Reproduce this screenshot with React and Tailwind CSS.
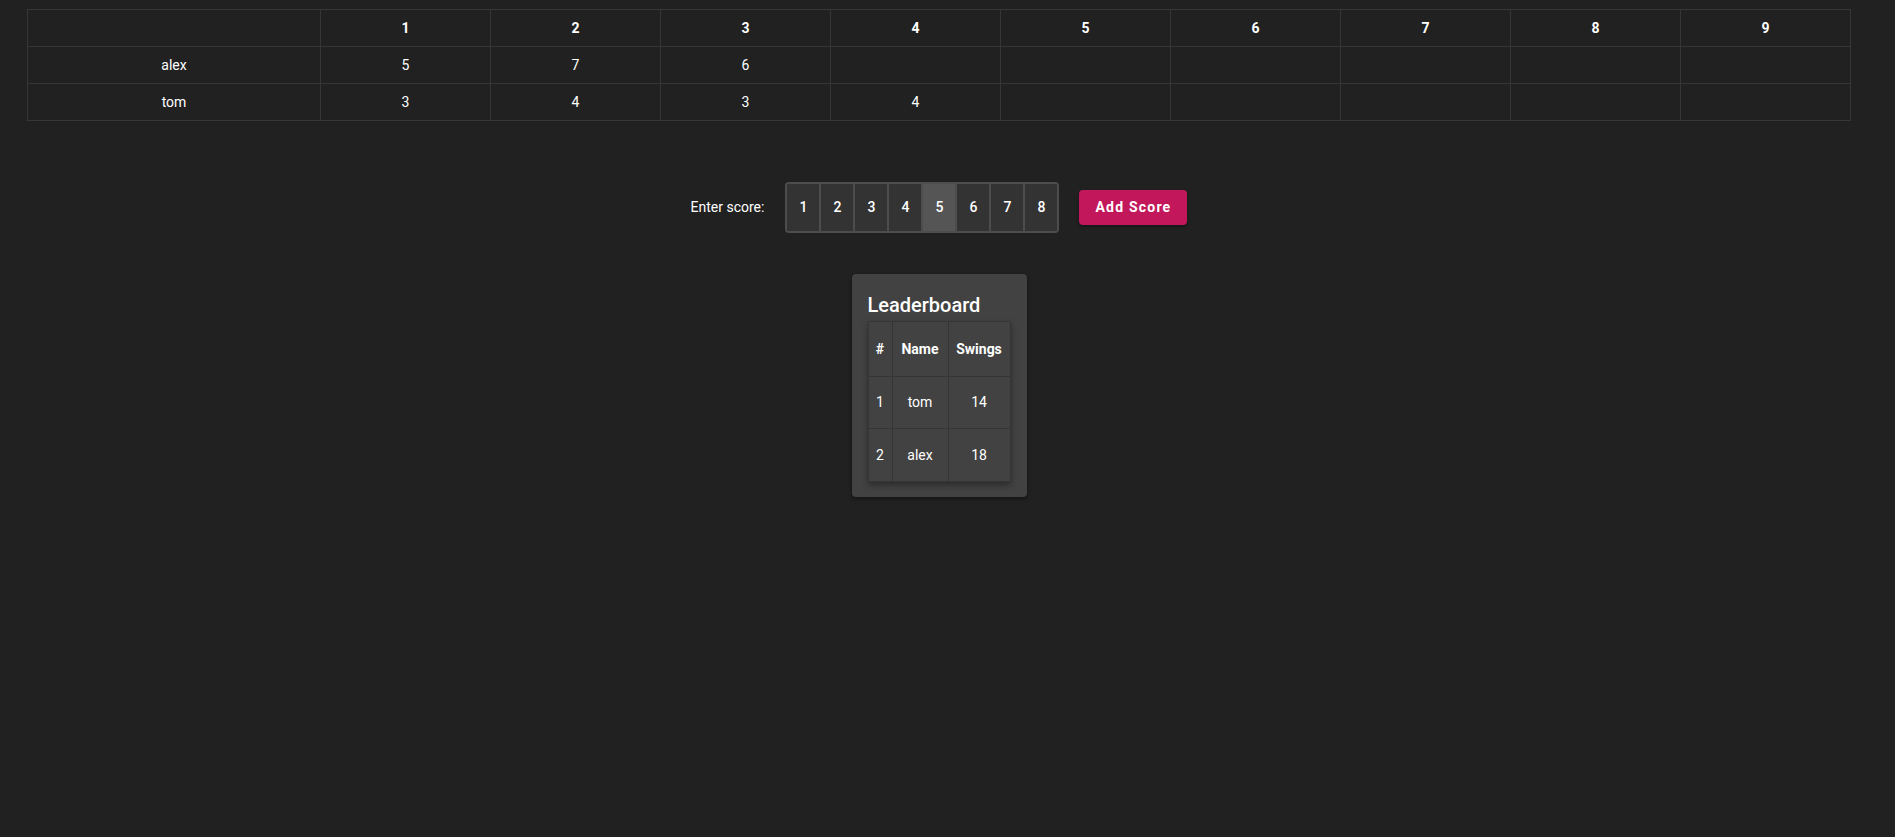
import React from "react";

const holes = [1, 2, 3, 4, 5, 6, 7, 8, 9];
const players = [
  { name: "alex", scores: [5, 7, 6] },
  { name: "tom", scores: [3, 4, 3, 4] },
];
const leaders = [
  { rank: 1, name: "tom", swings: 14 },
  { rank: 2, name: "alex", swings: 18 },
];

export default function App() {
  return (
    <div
      className="min-h-screen w-full bg-[#212121] text-white"
      style={{ fontFamily: "Roboto, 'Noto Sans', sans-serif" }}
    >
      <div className="w-[1878px] pt-[9px]">
        <div className="px-[27px]">
          <table className="w-full table-fixed border-collapse">
            <colgroup>
              <col className="w-[293px]" />
              {holes.map((h) => (
                <col key={h} />
              ))}
            </colgroup>
            <thead>
              <tr>
                <th className="h-[37px] border border-[#363636]"></th>
                {holes.map((h) => (
                  <th
                    key={h}
                    className="h-[37px] border border-[#363636] text-center text-[14px] font-bold"
                  >
                    {h}
                  </th>
                ))}
              </tr>
            </thead>
            <tbody>
              {players.map((p) => (
                <tr key={p.name}>
                  <td className="h-[37px] border border-[#363636] text-center text-[14px]">
                    {p.name}
                  </td>
                  {holes.map((h, i) => (
                    <td
                      key={h}
                      className="h-[37px] border border-[#363636] text-center text-[14px]"
                    >
                      {p.scores[i] ?? ""}
                    </td>
                  ))}
                </tr>
              ))}
            </tbody>
          </table>
        </div>

        <div className="mt-[61px] flex items-center justify-center">
          <span className="text-[14px] text-white">Enter score:</span>
          <div className="ml-[21px] flex overflow-hidden rounded-[4px] border-2 border-[#4d4d4d]">
            {[1, 2, 3, 4, 5, 6, 7, 8].map((n, i) => (
              <div
                key={n}
                className={
                  "flex h-[47px] items-center justify-center text-[14px] font-medium text-white " +
                  (i > 0 ? "w-[34px] border-l-2 border-[#4d4d4d] " : "w-[32px] ") +
                  (n === 5 ? "bg-[#555555]" : "bg-[#333333]")
                }
              >
                {n}
              </div>
            ))}
          </div>
          <button className="ml-[20px] flex h-[35px] w-[108px] items-center justify-center rounded-[4px] bg-[#c2185b] text-[14px] font-bold tracking-[1.2px] text-white shadow-[0_2px_3px_rgba(0,0,0,0.35)]">
            Add Score
          </button>
        </div>

        <div className="mx-auto mt-[41px] w-[175px] rounded-[4px] bg-[#424242] px-4 pb-[15px] pt-[15px] shadow-[0_2px_4px_rgba(0,0,0,0.4)]">
          <div className="h-[32px] text-[20px] font-medium leading-[32px] text-white">
            Leaderboard
          </div>
          <table className="w-full table-fixed border-collapse shadow-[0_3px_6px_rgba(0,0,0,0.35)]">
            <colgroup>
              <col className="w-[24px]" />
              <col className="w-[56px]" />
              <col className="w-[62px]" />
            </colgroup>
            <thead>
              <tr>
                <th className="h-[55px] border border-[#353535] text-center text-[14px] font-bold">#</th>
                <th className="h-[55px] border border-[#353535] text-center text-[14px] font-bold">Name</th>
                <th className="h-[55px] border border-[#353535] text-center text-[14px] font-bold">Swings</th>
              </tr>
            </thead>
            <tbody>
              {leaders.map((l, i) => (
                <tr key={l.rank}>
                  <td className={(i === 0 ? "h-[52px]" : "h-[53px]") + " border border-[#353535] text-center text-[14px]"}>
                    {l.rank}
                  </td>
                  <td className="border border-[#353535] text-center text-[14px]">{l.name}</td>
                  <td className="border border-[#353535] text-center text-[14px]">{l.swings}</td>
                </tr>
              ))}
            </tbody>
          </table>
        </div>
      </div>
    </div>
  );
}
